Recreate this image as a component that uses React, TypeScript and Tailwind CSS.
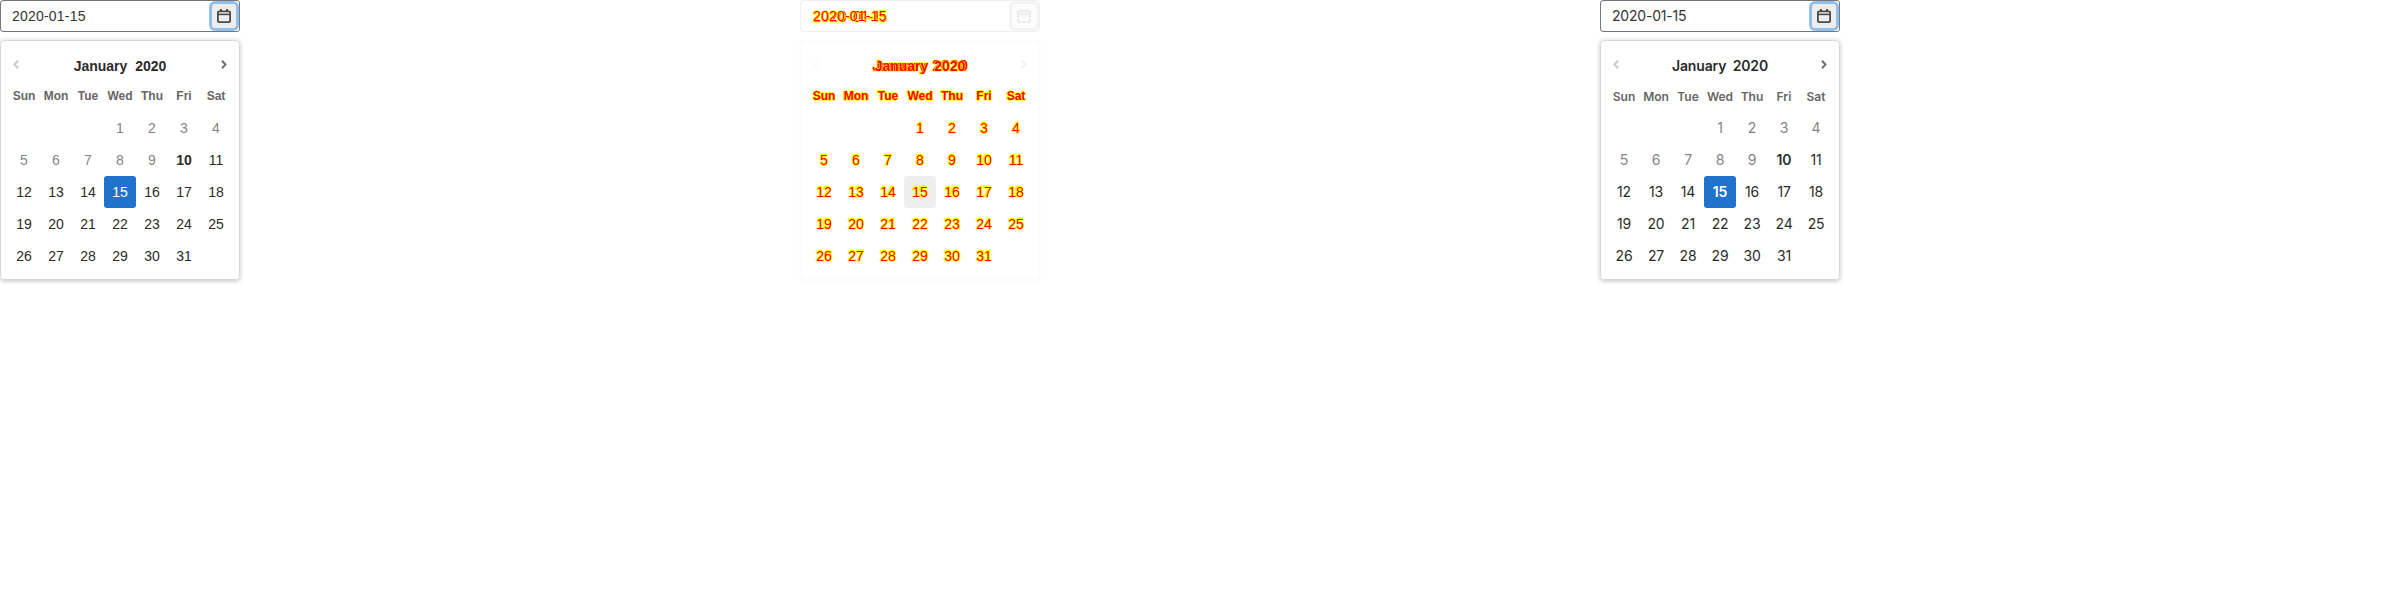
import React from "react";

type Variant = "before" | "diff" | "after";

const weekdays = ["Sun", "Mon", "Tue", "Wed", "Thu", "Fri", "Sat"];
const days: (number | null)[] = [null, null, null, ...Array.from({ length: 31 }, (_, i) => i + 1), null];

const fonts: Record<Variant, string> = {
  before: "font-['Liberation_Sans',sans-serif]",
  diff: "font-['Liberation_Sans',sans-serif]",
  after: "font-['Inter',sans-serif]",
};

// In the diff panel the second font's glyphs lie behind the first's, both outlined in yellow.
function Label({ text, variant, dense = false }: { text: string; variant: Variant; dense?: boolean }) {
  if (variant !== "diff") return <>{text}</>;
  return (
    <span
      data-text={text}
      className={`relative isolate whitespace-nowrap text-[#ff0000] [-webkit-text-stroke:1.2px_#ffff00] [paint-order:stroke_fill] before:absolute before:top-0 before:left-1/2 before:-z-10 before:-translate-x-1/2 before:font-['Inter',sans-serif] before:tracking-[-0.2px] before:content-[attr(data-text)] ${
        dense ? "before:text-[#ff0000]" : "before:text-[#ffff00]"
      }`}
    >
      {text}
    </span>
  );
}

function CalendarIcon() {
  return (
    <svg width="14" height="14" viewBox="0 0 14 14" fill="none" stroke="currentColor">
      <rect x="0.9" y="2.4" width="12.2" height="10.7" rx="1" strokeWidth="1.8" />
      <path d="M1 5.4H13" strokeWidth="1.6" />
      <path d="M4 0V3M10 0V3" strokeWidth="2" />
    </svg>
  );
}

function Chevron({ left = false, className }: { left?: boolean; className: string }) {
  return (
    <svg width="6" height="9" viewBox="0 0 6 9" fill="none" stroke="currentColor" strokeWidth="2" className={className}>
      <path d={left ? "M5 0.8L1.5 4.5L5 8.2" : "M1 0.8L4.5 4.5L1 8.2"} />
    </svg>
  );
}

function dayClass(day: number, variant: Variant) {
  if (variant === "diff") return day === 15 ? "bg-[#eeeeee]" : "";
  if (day === 15) return variant === "after" ? "bg-[#1f73cc] text-white font-semibold" : "bg-[#1f73cc] text-white";
  if (day === 10) return variant === "after" ? "font-semibold text-[#2b2b2b]" : "font-bold text-[#2b2b2b]";
  return day < 10 ? "text-[#858585]" : "text-[#2b2b2b]";
}

function DatePicker({ variant }: { variant: Variant }) {
  const diff = variant === "diff";
  const after = variant === "after";
  return (
    <section className={`w-[800px] ${fonts[variant]}`}>
      <div
        className={`flex h-8 w-60 items-center justify-between rounded-[3px] border ${
          diff ? "border-[#f0f0f0] pl-[12px]" : "border-[#767676] pl-[11px]"
        }`}
      >
        <span
          className={`text-[14px] leading-[18px] text-[#333333] ${
            after ? "tracking-[-0.2px]" : "tracking-[0.2px]"
          }`}
        >
          <Label text="2020-01-15" variant={variant} dense />
        </span>
        <span
          className={`mr-[3px] flex h-6 w-6 items-center justify-center rounded-[3px] ${
            diff
              ? "bg-[#fcfcfc] text-[#ebebeb] shadow-[0_0_0_3px_#f4f4f4]"
              : "bg-[#eeeeee] text-[#4a4a4a] shadow-[0_0_0_3px_#94bee9]"
          }`}
        >
          <CalendarIcon />
        </span>
      </div>
      <div
        className={`mt-2 h-60 w-60 rounded-[4px] border px-[7px] pt-[7px] ${
          diff ? "border-[#fbfbfb] shadow-[0_1px_4px_#fafafa]" : "border-[#d8d8d8] shadow-[0_1px_4px_rgba(0,0,0,0.25)]"
        }`}
      >
        <div className="flex h-8 items-center justify-between px-[5px]">
          <Chevron left className={diff ? "text-[#fafafa]" : "text-[#c9c9c9]"} />
          <span
            className={`mt-[3px] text-[14px] leading-4 text-[#2b2b2b] ${
              after
                ? "font-semibold tracking-[-0.15px] [word-spacing:3px]"
                : diff
                  ? "font-bold [word-spacing:2px]"
                  : "font-bold [word-spacing:4px]"
            }`}
          >
            <Label text="January 2020" variant={variant} dense />
          </span>
          <Chevron className={diff ? "text-[#f0f0f0]" : "text-[#707070]"} />
        </div>
        <div
          className={`grid grid-cols-[repeat(7,32px)] text-[12px] text-[#666666] ${after ? "font-semibold" : "font-bold"}`}
        >
          {weekdays.map((name) => (
            <span key={name} className={`flex h-8 items-center justify-center ${after ? "pt-0.5" : ""}`}>
              <Label text={name} variant={variant} dense />
            </span>
          ))}
        </div>
        <div className={`grid grid-cols-[repeat(7,32px)] text-[14px] leading-5 ${after ? "tracking-[-0.2px]" : ""}`}>
          {days.map((day, i) => (
            <span
              key={i}
              className={`flex h-8 items-center justify-center rounded-[3px] ${day === null ? "" : dayClass(day, variant)}`}
            >
              {day !== null && <Label text={String(day)} variant={variant} />}
            </span>
          ))}
        </div>
      </div>
    </section>
  );
}

export default function App() {
  return (
    <main className="flex h-[600px] w-[2400px] overflow-hidden bg-white">
      <DatePicker variant="before" />
      <DatePicker variant="diff" />
      <DatePicker variant="after" />
    </main>
  );
}
